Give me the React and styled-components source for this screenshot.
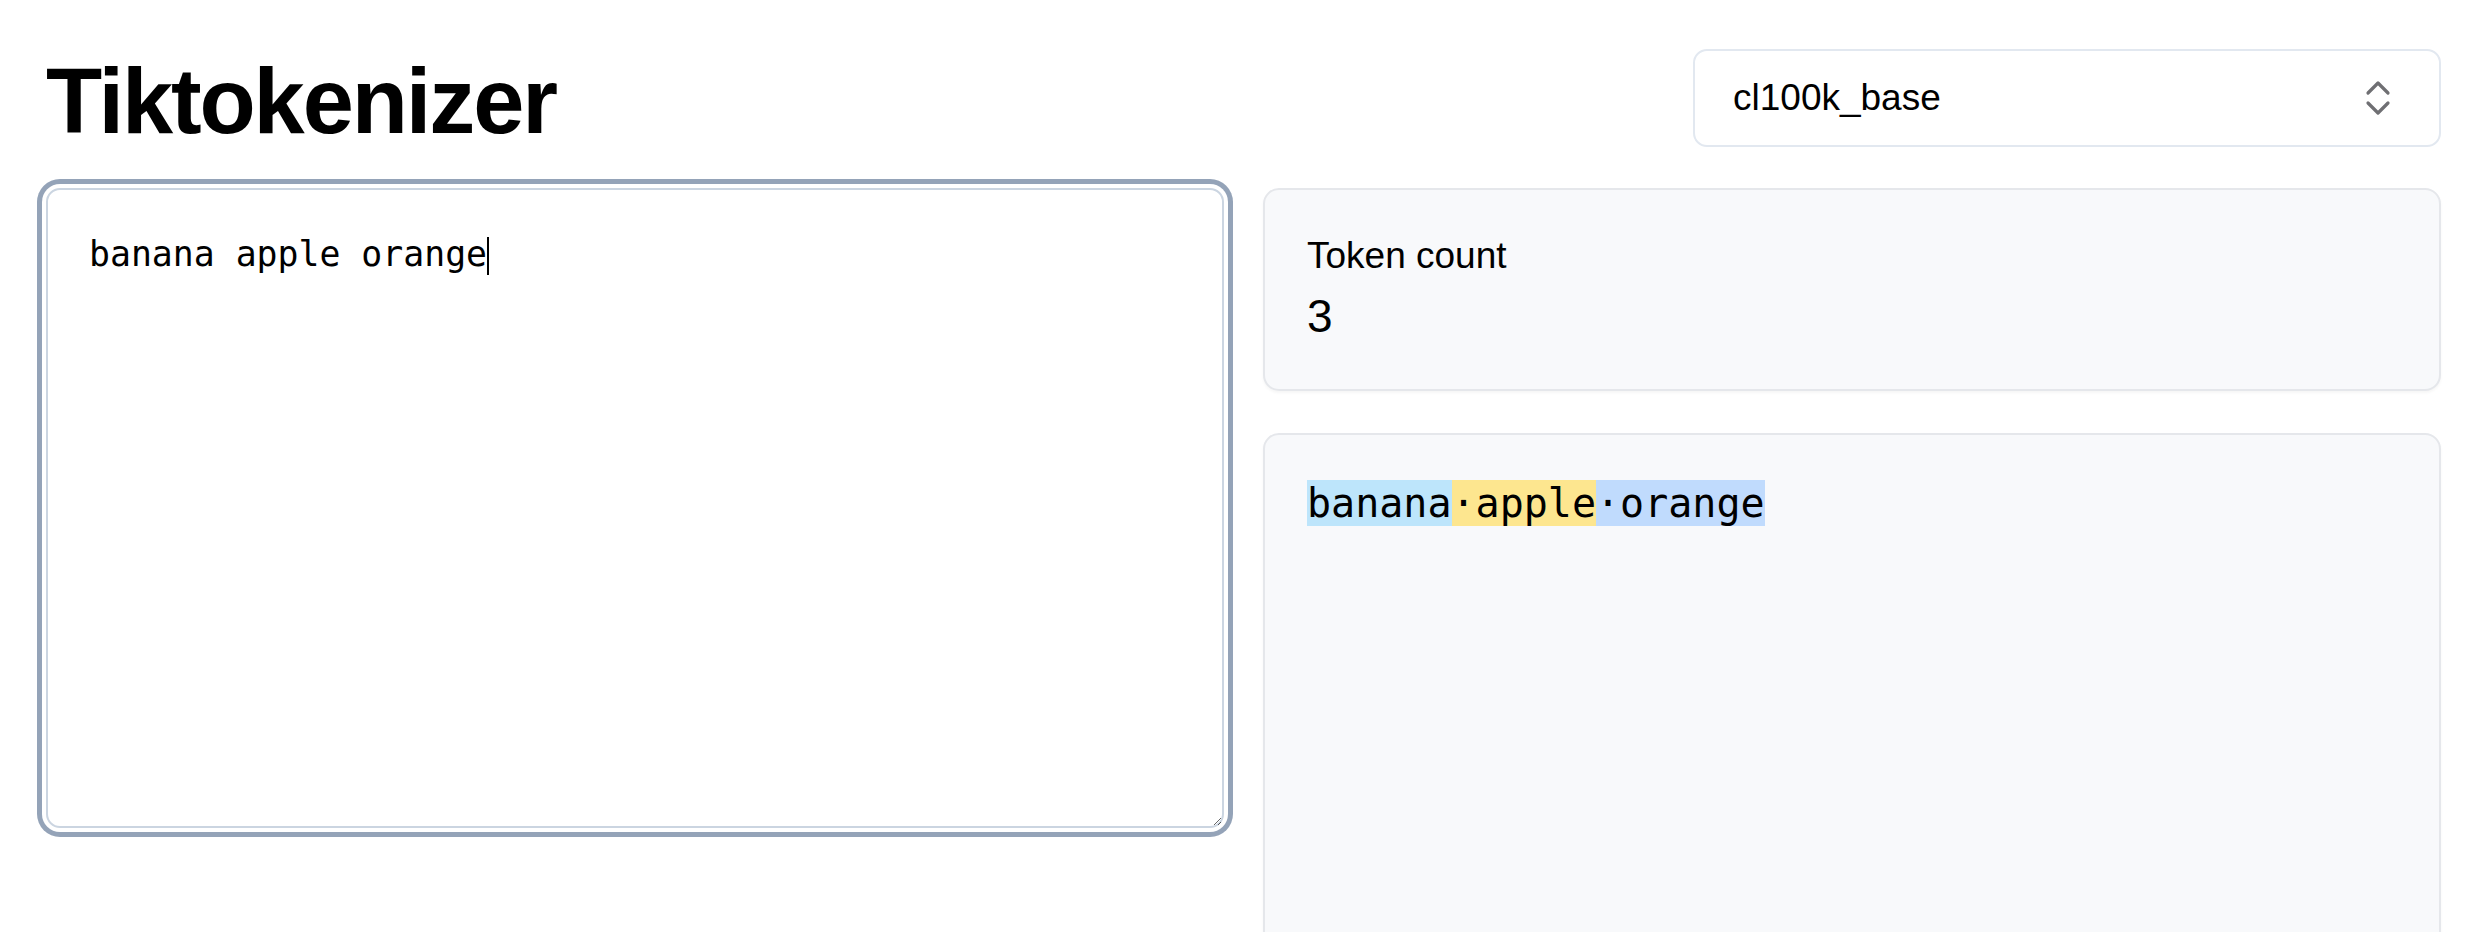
import React, { useEffect, useRef } from "react";
import styled, { createGlobalStyle } from "styled-components";

const GlobalStyle = createGlobalStyle`
  html, body {
    margin: 0;
    padding: 0;
    background: #ffffff;
    color: #000000;
    font-family: "Liberation Sans", Arial, sans-serif;
  }
  * { box-sizing: border-box; }
`;

const Page = styled.main`
  display: flex;
  flex-direction: column;
  gap: 41px;
  padding: 49px 45px 0 46px;
`;

const Header = styled.header`
  display: flex;
  align-items: flex-start;
  justify-content: space-between;
`;

const Title = styled.h1`
  margin: 0;
  padding-top: 6px;
  font-size: 92px;
  line-height: 92px;
  font-weight: 700;
  letter-spacing: -2.1px;
  color: #000;
`;

const SelectTrigger = styled.button`
  display: flex;
  align-items: center;
  justify-content: space-between;
  width: 748px;
  height: 98px;
  padding: 0 37px 0 38px;
  background: #ffffff;
  border: 2px solid #e2e8f0;
  border-radius: 14px;
  font-family: "Liberation Sans", Arial, sans-serif;
  font-size: 37px;
  color: #000;
  cursor: pointer;
`;

const SelectIcon = styled.svg`
  width: 48px;
  height: 48px;
  color: #6f6f73;
`;

const Grid = styled.section`
  display: grid;
  grid-template-columns: 1fr 1fr;
  gap: 39px;
  align-items: start;
`;

const EditorWrap = styled.div`
  position: relative;
`;

const Editor = styled.textarea`
  display: block;
  width: 100%;
  height: 640px;
  margin: 0;
  padding: 38px 41px;
  border: 2px solid #cbd5e1;
  border-radius: 14px;
  background: #ffffff;
  box-shadow: 0 0 0 4px #ffffff, 0 0 0 9px #94a3b8;
  outline: none;
  font-family: "DejaVu Sans Mono", Menlo, monospace;
  font-size: 34.8px;
  line-height: 52px;
  color: #000;
  caret-color: transparent;
  resize: vertical;
`;

const Caret = styled.span`
  position: absolute;
  left: 441px;
  top: 49px;
  width: 2px;
  height: 38px;
  background: #000;
  pointer-events: none;
`;

const Column = styled.div`
  display: flex;
  flex-direction: column;
  gap: 42px;
`;

const Card = styled.div`
  background: #f8f9fb;
  border: 2px solid #e5e7eb;
  border-radius: 16px;
  box-shadow: 0 2px 3px rgba(0, 0, 0, 0.04);
  padding: ${(p) => p.$padding || "40px 42px"};
  min-height: ${(p) => p.$minHeight || "auto"};
`;

const Label = styled.div`
  font-size: 37px;
  line-height: 52px;
  color: #000;
`;

const Count = styled.div`
  margin-top: 6px;
  font-size: 46px;
  line-height: 56px;
  color: #000;
`;

const TokenLine = styled.pre`
  margin: 0;
  font-family: "DejaVu Sans Mono", Menlo, monospace;
  font-size: 40px;
  line-height: 60px;
  white-space: pre-wrap;
  color: #000;
`;

const Token = styled.span`
  background: ${(p) => p.$color};
`;

const tokens = [
  { text: "banana", color: "#bde5fb" },
  { text: "\u00b7apple", color: "#fde68f" },
  { text: "\u00b7orange", color: "#c0dbfd" },
];

export default function App() {
  const ref = useRef(null);
  useEffect(() => {
    const el = ref.current;
    if (el) {
      el.focus();
      const n = el.value.length;
      el.setSelectionRange(n, n);
    }
  }, []);

  return (
    <>
      <GlobalStyle />
      <Page>
        <Header>
          <Title>Tiktokenizer</Title>
          <SelectTrigger type="button">
            <span>cl100k_base</span>
            <SelectIcon
              viewBox="0 0 24 24"
              fill="none"
              stroke="currentColor"
              strokeWidth="1.6"
              strokeLinecap="round"
              strokeLinejoin="round"
            >
              <path d="M7 9.5 L12 4.5 L17 9.5" />
              <path d="M7 14.5 L12 19.5 L17 14.5" />
            </SelectIcon>
          </SelectTrigger>
        </Header>
        <Grid>
          <EditorWrap>
            <Editor ref={ref} defaultValue="banana apple orange" spellCheck={false} />
            <Caret />
          </EditorWrap>
          <Column>
            <Card $padding="40px 42px 45px">
              <Label>Token count</Label>
              <Count>3</Count>
            </Card>
            <Card $padding="38px 42px" $minHeight="640px">
              <TokenLine>
                {tokens.map((t, i) => (
                  <Token key={i} $color={t.color}>
                    {t.text}
                  </Token>
                ))}
              </TokenLine>
            </Card>
          </Column>
        </Grid>
      </Page>
    </>
  );
}
